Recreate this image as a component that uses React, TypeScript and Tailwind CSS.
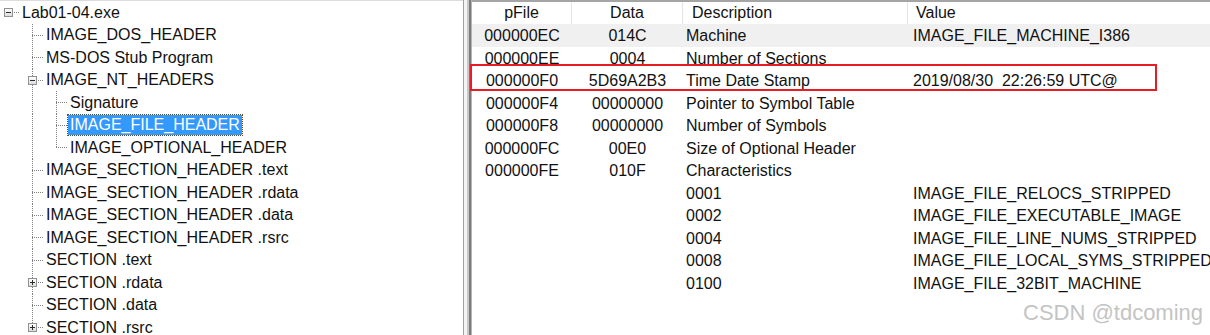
import React from "react";

type Node = {
  label: string;
  level: number;
  box?: "+" | "-";
  last?: boolean;
  selected?: boolean;
};

const TREE: Node[] = [
  { label: "Lab01-04.exe", level: 0, box: "-" },
  { label: "IMAGE_DOS_HEADER", level: 1 },
  { label: "MS-DOS Stub Program", level: 1 },
  { label: "IMAGE_NT_HEADERS", level: 1, box: "-" },
  { label: "Signature", level: 2 },
  { label: "IMAGE_FILE_HEADER", level: 2, selected: true },
  { label: "IMAGE_OPTIONAL_HEADER", level: 2, last: true },
  { label: "IMAGE_SECTION_HEADER .text", level: 1 },
  { label: "IMAGE_SECTION_HEADER .rdata", level: 1 },
  { label: "IMAGE_SECTION_HEADER .data", level: 1 },
  { label: "IMAGE_SECTION_HEADER .rsrc", level: 1 },
  { label: "SECTION .text", level: 1 },
  { label: "SECTION .rdata", level: 1, box: "+" },
  { label: "SECTION .data", level: 1 },
  { label: "SECTION .rsrc", level: 1, box: "+", last: true },
];

const ROWS = [
  { pFile: "000000EC", data: "014C", desc: "Machine", value: "IMAGE_FILE_MACHINE_I386" },
  { pFile: "000000EE", data: "0004", desc: "Number of Sections", value: "" },
  { pFile: "000000F0", data: "5D69A2B3", desc: "Time Date Stamp", value: "2019/08/30\u00a0\u00a022:26:59 UTC@" },
  { pFile: "000000F4", data: "00000000", desc: "Pointer to Symbol Table", value: "" },
  { pFile: "000000F8", data: "00000000", desc: "Number of Symbols", value: "" },
  { pFile: "000000FC", data: "00E0", desc: "Size of Optional Header", value: "" },
  { pFile: "000000FE", data: "010F", desc: "Characteristics", value: "" },
  { pFile: "", data: "", desc: "0001", value: "IMAGE_FILE_RELOCS_STRIPPED" },
  { pFile: "", data: "", desc: "0002", value: "IMAGE_FILE_EXECUTABLE_IMAGE" },
  { pFile: "", data: "", desc: "0004", value: "IMAGE_FILE_LINE_NUMS_STRIPPED" },
  { pFile: "", data: "", desc: "0008", value: "IMAGE_FILE_LOCAL_SYMS_STRIPPED" },
  { pFile: "", data: "", desc: "0100", value: "IMAGE_FILE_32BIT_MACHINE" },
];

// dotted tree guide lines
const vDots = "bg-[repeating-linear-gradient(to_bottom,#808080_0_1px,transparent_1px_2px)]";
const hDots = "bg-[repeating-linear-gradient(to_right,#808080_0_1px,transparent_1px_2px)]";

function ExpandBox({ sign }: { sign: "+" | "-" }) {
  return (
    <span className="absolute left-[4px] top-[7px] w-[9px] h-[9px] border border-[#919191] bg-gradient-to-b from-white to-[#dcdcdc] flex items-center justify-center">
      <span className="absolute w-[5px] h-px bg-[#2b2b2b]" />
      {sign === "+" && <span className="absolute w-px h-[5px] bg-[#2b2b2b]" />}
    </span>
  );
}

// rows alternate 23/22px so the dotted guides land on whole pixels
function TreeRow({ node, index }: { node: Node; index: number }) {
  const tall = index % 2 === 0;
  const rowH = tall ? "h-[23px]" : "h-[22px]";
  const guides = [];
  for (let i = 0; i < node.level; i++) {
    guides.push(
      <div key={i} className={`relative w-6 shrink-0 ${rowH}`}>
        {i >= 1 && <div className={`absolute left-[8px] top-0 bottom-0 w-px ${vDots}`} />}
      </div>
    );
  }
  return (
    <div className={`flex items-center whitespace-nowrap ${rowH}`}>
      {guides}
      <div className={`relative w-[20px] shrink-0 ${rowH}`}>
        {node.level > 0 && (
          <div className={`absolute left-[8px] top-0 w-px ${vDots} ${node.last ? "h-[11px]" : "bottom-0"}`} />
        )}
        <div className={`absolute left-[8px] right-0 top-[11px] h-px ${hDots}`} />
        {node.box && <ExpandBox sign={node.box} />}
      </div>
      <span
        className={
          node.selected
            ? "px-[2px] h-[20px] leading-[19px] bg-[#3399ff] text-white outline outline-1 outline-dotted outline-[#6b4a1a]"
            : "px-[2px] text-[#111]"
        }
      >
        {node.label}
      </span>
    </div>
  );
}

export default function App() {
  return (
    <div
      className="relative w-[1210px] h-[335px] overflow-hidden bg-white flex text-[16px]"
      style={{ fontFamily: '"Liberation Sans", Arial, sans-serif' }}
    >
      {/* tree pane */}
      <div className="w-[463px] shrink-0 h-full border-t border-[#dcdcdc] overflow-hidden">
        {TREE.map((n, i) => (
          <TreeRow key={n.label} node={n} index={i} />
        ))}
      </div>

      {/* splitter */}
      <div className="w-[9px] shrink-0 h-full flex">
        <div className="w-px bg-[#a0a0a0]" />
        <div className="w-[3px] bg-[#f4f4f4]" />
        <div className="w-[2px] bg-[#c8c8c8]" />
        <div className="w-[2px] bg-[#7c7c7c]" />
        <div className="w-px bg-[#b4b4b4]" />
      </div>

      {/* detail list */}
      <div className="flex-1 h-full border-t-2 border-[#a5a5a5] overflow-hidden">
        <div className="grid grid-cols-[100px_111px_225px_1fr] h-[22px] items-center text-[#111]">
          <div className="text-center border-r border-[#e5e5e5] h-full leading-[22px]">pFile</div>
          <div className="text-center border-r border-[#e5e5e5] h-full leading-[22px]">Data</div>
          <div className="pl-[9px] border-r border-[#e5e5e5] h-full leading-[22px]">Description</div>
          <div className="pl-[8px] h-full leading-[22px]">Value</div>
        </div>
        {ROWS.map((r, i) => (
          <div
            key={i}
            className={`grid grid-cols-[100px_111px_225px_1fr] h-[22.5px] items-center whitespace-nowrap text-[#111] ${i === 0 ? "bg-[#f0f0f0]" : ""}`}
          >
            <div className="text-center">{r.pFile}</div>
            <div className="text-center">{r.data}</div>
            <div className="pl-[3px]">{r.desc}</div>
            <div className="pl-[5px]">{r.value}</div>
          </div>
        ))}
      </div>

      {/* red annotation box */}
      <div className="absolute left-[470px] top-[64px] w-[687px] h-[27px] border-2 border-[#e81c24]" />

      {/* watermark */}
      <div className="absolute left-[1023px] top-[299px] text-[22px] leading-[28px] text-[#c4c4c4] whitespace-nowrap">
        CSDN @tdcoming
      </div>
    </div>
  );
}
